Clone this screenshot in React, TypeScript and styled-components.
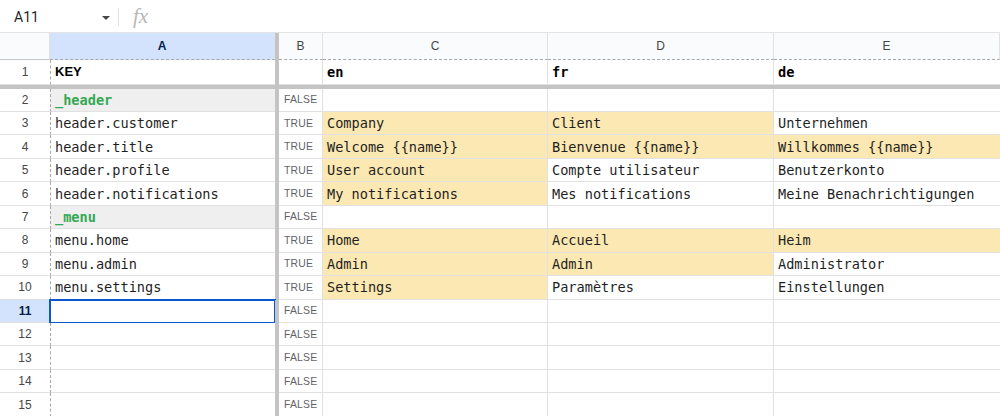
import React from "react";
import styled, { createGlobalStyle } from "styled-components";

const GlobalStyle = createGlobalStyle`
  html, body { margin: 0; padding: 0; background: #ffffff; overflow: hidden; }
  body { font-family: Arial, "Liberation Sans", sans-serif; }
  * { box-sizing: border-box; }
`;

const COLS = "50px 225px 4px 44px 225px 226px 1fr";
const GRID = "#e1e1e1";
const FREEZE = "#c4c4c4";
const MONO = `"DejaVu Sans Mono", "Liberation Mono", monospace`;

const Page = styled.div`
  width: 1000px;
  height: 416px;
  display: flex;
  flex-direction: column;
  overflow: hidden;
`;

const Toolbar = styled.div`
  height: 33px;
  flex: 0 0 33px;
  display: flex;
  align-items: center;
  border-bottom: 1px solid #e3e3e3;
  padding-left: 14px;
  padding-top: 2px;
`;

const NameBox = styled.div`
  width: 104px;
  display: flex;
  align-items: center;
  justify-content: space-between;
  font-family: Roboto, Arial, sans-serif;
  font-size: 14px;
  color: #1f1f1f;
  padding-right: 8px;
`;

const Caret = styled.span`
  width: 0;
  height: 0;
  border-left: 4px solid transparent;
  border-right: 4px solid transparent;
  border-top: 4px solid #444746;
  margin-top: 1px;
`;

const Divider = styled.span`
  width: 1px;
  height: 18px;
  background: #e0e0e0;
  margin-right: 14px;
`;

const Fx = styled.span`
  font-family: "Liberation Serif", serif;
  font-style: italic;
  font-size: 21px;
  color: #b7b7b7;
  margin-top: -2px;
`;

const Sheet = styled.div`
  display: flex;
  flex-direction: column;
`;

const Row = styled.div<{ $h: number }>`
  display: grid;
  grid-template-columns: ${COLS};
  height: ${(p) => p.$h}px;
  flex: 0 0 ${(p) => p.$h}px;
`;

const FreezeRow = styled.div`
  height: 4px;
  flex: 0 0 4px;
  background: ${FREEZE};
`;

const FreezeCol = styled.div`
  background: ${FREEZE};
`;

const ColHead = styled.div<{ $sel?: boolean; $corner?: boolean }>`
  display: flex;
  align-items: center;
  justify-content: center;
  font-family: Arial, "Liberation Sans", sans-serif;
  font-size: 12px;
  color: ${(p) => (p.$sel ? "#041e49" : "#444746")};
  font-weight: ${(p) => (p.$sel ? 700 : 400)};
  background: ${(p) => (p.$sel ? "#d3e3fd" : "#f9fbfd")};
  border-right: 1px solid ${GRID};
  border-bottom: 1px ${(p) => (p.$corner ? "solid" : "dashed")} ${(p) => (p.$corner ? "#c7c7c7" : "#a8a8a8")};
`;

const RowHead = styled.div<{ $sel?: boolean }>`
  display: flex;
  align-items: center;
  justify-content: center;
  font-family: Arial, "Liberation Sans", sans-serif;
  font-size: 12px;
  color: ${(p) => (p.$sel ? "#041e49" : "#444746")};
  font-weight: ${(p) => (p.$sel ? 700 : 400)};
  background: ${(p) => (p.$sel ? "#d3e3fd" : "#ffffff")};
  border-bottom: 1px solid ${GRID};
`;

const Cell = styled.div<{ $bg?: string; $keyCol?: boolean; $sel?: boolean; $last?: boolean }>`
  display: flex;
  align-items: center;
  padding-left: 4px;
  font-family: ${MONO};
  font-size: 13.6px;
  color: #1f1f1f;
  white-space: nowrap;
  overflow: hidden;
  background: ${(p) => p.$bg || "#ffffff"};
  border-bottom: 1px solid ${GRID};
  border-right: ${(p) => (p.$keyCol || p.$last ? "none" : `1px solid ${GRID}`)};
  border-left: ${(p) => (p.$keyCol ? "1px dashed #a8a8a8" : "none")};
  outline: ${(p) => (p.$sel ? "2px solid #0b57d0" : "none")};
  outline-offset: -1px;
`;

const HeadText = styled.span<{ $green?: boolean; $sans?: boolean }>`
  font-weight: 700;
  font-family: ${(p) => (p.$sans ? `Arial, "Liberation Sans", sans-serif` : MONO)};
  font-size: ${(p) => (p.$sans ? "13px" : "13.6px")};
  color: ${(p) => (p.$green ? "#34a853" : "#000000")};
`;

const Bool = styled.div`
  display: flex;
  align-items: center;
  padding-left: 5px;
  font-family: Arial, "Liberation Sans", sans-serif;
  font-size: 10.4px;
  letter-spacing: 0.2px;
  color: #5f6368;
  background: #ffffff;
  border-bottom: 1px solid ${GRID};
  border-right: 1px solid ${GRID};
`;

const YELLOW = "#fce8b2";
const SECTION = "#efefef";

type T = [string, boolean];
type DataRow = {
  n: number;
  key: string;
  section?: boolean;
  b: string;
  c?: T;
  d?: T;
  e?: T;
  sel?: boolean;
};

const rows: DataRow[] = [
  { n: 2, key: "_header", section: true, b: "FALSE" },
  { n: 3, key: "header.customer", b: "TRUE", c: ["Company", true], d: ["Client", true], e: ["Unternehmen", false] },
  { n: 4, key: "header.title", b: "TRUE", c: ["Welcome {{name}}", true], d: ["Bienvenue {{name}}", true], e: ["Willkommes {{name}}", true] },
  { n: 5, key: "header.profile", b: "TRUE", c: ["User account", true], d: ["Compte utilisateur", false], e: ["Benutzerkonto", false] },
  { n: 6, key: "header.notifications", b: "TRUE", c: ["My notifications", true], d: ["Mes notifications", false], e: ["Meine Benachrichtigungen", false] },
  { n: 7, key: "_menu", section: true, b: "FALSE" },
  { n: 8, key: "menu.home", b: "TRUE", c: ["Home", true], d: ["Accueil", true], e: ["Heim", true] },
  { n: 9, key: "menu.admin", b: "TRUE", c: ["Admin", true], d: ["Admin", true], e: ["Administrator", false] },
  { n: 10, key: "menu.settings", b: "TRUE", c: ["Settings", true], d: ["Paramètres", false], e: ["Einstellungen", false] },
  { n: 11, key: "", b: "FALSE", sel: true },
  { n: 12, key: "", b: "FALSE" },
  { n: 13, key: "", b: "FALSE" },
  { n: 14, key: "", b: "FALSE" },
  { n: 15, key: "", b: "FALSE" },
];

const ROW_H = 23.46;

const Translation: React.FC<{ t?: T; last?: boolean }> = ({ t, last }) => (
  <Cell $bg={t && t[1] ? YELLOW : "#ffffff"} $last={last}>
    {t ? t[0] : ""}
  </Cell>
);

export default function App() {
  return (
    <>
      <GlobalStyle />
      <Page>
        <Toolbar>
          <NameBox>
            <span>A11</span>
            <Caret />
          </NameBox>
          <Divider />
          <Fx>fx</Fx>
        </Toolbar>
        <Sheet>
          <Row $h={26.5}>
            <ColHead $corner />
            <ColHead $sel>A</ColHead>
            <FreezeCol />
            <ColHead>B</ColHead>
            <ColHead>C</ColHead>
            <ColHead>D</ColHead>
            <ColHead>E</ColHead>
          </Row>
          <Row $h={25}>
            <RowHead>1</RowHead>
            <Cell $keyCol>
              <HeadText $sans>KEY</HeadText>
            </Cell>
            <FreezeCol />
            <Cell />
            <Cell>
              <HeadText>en</HeadText>
            </Cell>
            <Cell>
              <HeadText>fr</HeadText>
            </Cell>
            <Cell $last>
              <HeadText>de</HeadText>
            </Cell>
          </Row>
          <FreezeRow />
          {rows.map((r) => (
            <Row key={r.n} $h={ROW_H}>
              <RowHead $sel={r.sel}>{r.n}</RowHead>
              <Cell $keyCol $sel={r.sel} $bg={r.section ? SECTION : "#ffffff"}>
                {r.section ? <HeadText $green>{r.key}</HeadText> : r.key}
              </Cell>
              <FreezeCol />
              <Bool>{r.b}</Bool>
              <Translation t={r.c} />
              <Translation t={r.d} />
              <Translation t={r.e} last />
            </Row>
          ))}
        </Sheet>
      </Page>
    </>
  );
}
